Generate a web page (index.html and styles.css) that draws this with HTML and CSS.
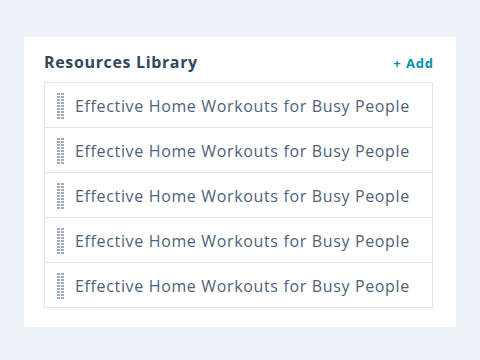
FILE: index.html
```html
<!DOCTYPE html>
<html>
<head>
<meta charset="utf-8">
<link rel="stylesheet" href="styles.css">
</head>
<body>
<div class="card">
  <div class="header">
    <h2 class="title">Resources Library</h2>
    <a class="add">+ Add</a>
  </div>
  <ul class="list">
    <li class="row"><svg class="handle" width="7" height="27" viewBox="0 0 7 27"><path d="M0 1h3M4 1h3M0 4h3M4 4h3M0 7h3M4 7h3M0 10h3M4 10h3M0 13h3M4 13h3M0 16h3M4 16h3M0 19h3M4 19h3M0 22h3M4 22h3M0 25h3M4 25h3" stroke="#8293a8" stroke-width="1.6"/></svg><span class="label">Effective Home Workouts for Busy People</span></li>
    <li class="row"><svg class="handle" width="7" height="27" viewBox="0 0 7 27"><path d="M0 1h3M4 1h3M0 4h3M4 4h3M0 7h3M4 7h3M0 10h3M4 10h3M0 13h3M4 13h3M0 16h3M4 16h3M0 19h3M4 19h3M0 22h3M4 22h3M0 25h3M4 25h3" stroke="#8293a8" stroke-width="1.6"/></svg><span class="label">Effective Home Workouts for Busy People</span></li>
    <li class="row"><svg class="handle" width="7" height="27" viewBox="0 0 7 27"><path d="M0 1h3M4 1h3M0 4h3M4 4h3M0 7h3M4 7h3M0 10h3M4 10h3M0 13h3M4 13h3M0 16h3M4 16h3M0 19h3M4 19h3M0 22h3M4 22h3M0 25h3M4 25h3" stroke="#8293a8" stroke-width="1.6"/></svg><span class="label">Effective Home Workouts for Busy People</span></li>
    <li class="row"><svg class="handle" width="7" height="27" viewBox="0 0 7 27"><path d="M0 1h3M4 1h3M0 4h3M4 4h3M0 7h3M4 7h3M0 10h3M4 10h3M0 13h3M4 13h3M0 16h3M4 16h3M0 19h3M4 19h3M0 22h3M4 22h3M0 25h3M4 25h3" stroke="#8293a8" stroke-width="1.6"/></svg><span class="label">Effective Home Workouts for Busy People</span></li>
    <li class="row"><svg class="handle" width="7" height="27" viewBox="0 0 7 27"><path d="M0 1h3M4 1h3M0 4h3M4 4h3M0 7h3M4 7h3M0 10h3M4 10h3M0 13h3M4 13h3M0 16h3M4 16h3M0 19h3M4 19h3M0 22h3M4 22h3M0 25h3M4 25h3" stroke="#8293a8" stroke-width="1.6"/></svg><span class="label">Effective Home Workouts for Busy People</span></li>
  </ul>
</div>
</body>
</html>
```

FILE: styles.css
```css
html, body {
  margin: 0;
  padding: 0;
}
body {
  background: #edf1f8;
  width: 480px;
  height: 360px;
  padding: 37px 25px 0 24px;
  box-sizing: border-box;
  font-family: "Open Sans", "Noto Sans", sans-serif;
}
.card {
  background: #ffffff;
  width: 432px;
  height: 290px;
  box-sizing: border-box;
  padding: 14px 23px 0 20px;
}
.header {
  display: flex;
  align-items: baseline;
  justify-content: space-between;
  height: 31px;
  box-sizing: border-box;
  padding-bottom: 9px;
}
.title {
  margin: 0;
  font-size: 16px;
  line-height: 22px;
  font-weight: 700;
  letter-spacing: 0.65px;
  color: #33475b;
}
.add {
  font-size: 13px;
  font-weight: 700;
  letter-spacing: 0.9px;
  color: #0091ae;
  margin-right: -1px;
}
.list {
  list-style: none;
  margin: 0;
  padding: 0;
  border: 1px solid #dfe3eb;
}
.row {
  display: flex;
  align-items: center;
  height: 45px;
  box-sizing: border-box;
  padding-left: 12px;
  padding-top: 2px;
  border-top: 1px solid #dfe3eb;
}
.row:first-child {
  border-top: none;
  height: 44px;
}
.handle {
  flex: none;
  margin-right: 11px;
}
.label {
  font-size: 16px;
  letter-spacing: 0.65px;
  color: #4f6178;
}
```
